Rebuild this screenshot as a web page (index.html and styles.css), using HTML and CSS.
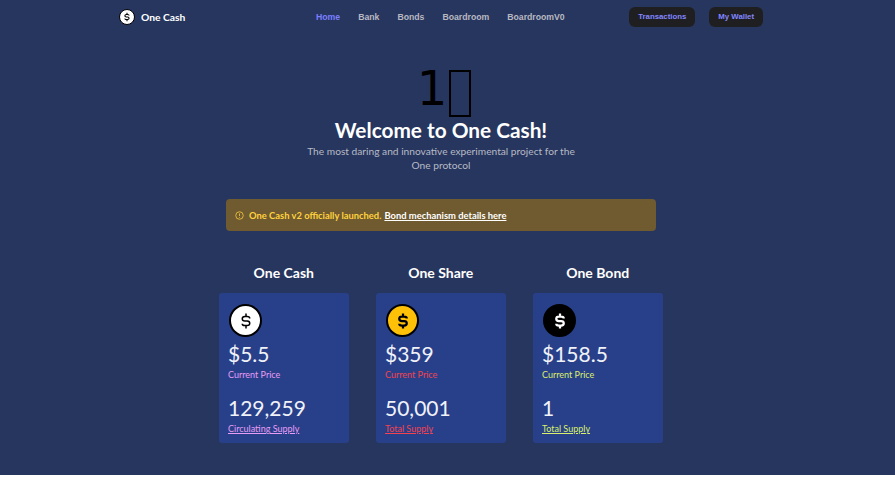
FILE: index.html
```html
<!DOCTYPE html>
<html lang="en">
<head>
    <meta charset="UTF-8">
    <meta name="viewport" content="width=device-width, initial-scale=1.0">
    <title>One Cash</title>
    <link rel="stylesheet" href="styles.css">
</head>
<body>
    <div class="page">
        <nav class="topbar">
            <a class="brand" href="#">
                <span class="coin coin-small">
                    <svg viewBox="0 0 24 24" width="10" height="10"><path d="M12 2v4M12 18v4M17 8.500C17 7 15.500 6 13.500 6h-3C8.500 6 7 7.300 7 9s1.500 3 3.500 3h3c2 0 3.500 1.300 3.500 3s-1.500 3-3.500 3h-3C8.500 18 7 17 7 15.500" fill="none" stroke="#000" stroke-width="2.600"/></svg>
                </span>
                One Cash
            </a>
            <div class="links">
                <a class="link active" href="#">Home</a>
                <a class="link" href="#">Bank</a>
                <a class="link" href="#">Bonds</a>
                <a class="link" href="#">Boardroom</a>
                <a class="link" href="#">BoardroomV0</a>
            </div>
            <div class="actions">
                <button class="pill">Transactions</button>
                <button class="pill">My Wallet</button>
            </div>
        </nav>

        <header class="hero">
            <div class="hero-mark">1<span class="tofu"></span></div>
            <h1>Welcome to One Cash!</h1>
            <p>The most daring and innovative experimental project for the One protocol</p>
        </header>

        <div class="notice">
            <svg class="notice-icon" viewBox="0 0 24 24" width="9" height="9"><circle cx="12" cy="12" r="10" fill="none" stroke="#ffd23f" stroke-width="2"/><path d="M12 6.500v7M12 16v2" stroke="#ffd23f" stroke-width="2"/></svg>
            <span>One Cash v2 officially launched.</span>
            <a href="#">Bond mechanism details here</a>
        </div>

        <section class="cards">
            <div class="col">
                <h2>One Cash</h2>
                <div class="card cash">
                    <span class="coin coin-white">
                        <svg viewBox="0 0 24 24" width="18" height="18"><path d="M12 2v4M12 18v4M17 8.500C17 7 15.500 6 13.500 6h-3C8.500 6 7 7.300 7 9s1.500 3 3.500 3h3c2 0 3.500 1.300 3.500 3s-1.500 3-3.500 3h-3C8.500 18 7 17 7 15.500" fill="none" stroke="#000" stroke-width="2"/></svg>
                    </span>
                    <div class="value">$5.5</div>
                    <div class="label">Current Price</div>
                    <div class="value second">129,259</div>
                    <a class="label" href="#">Circulating Supply</a>
                </div>
            </div>
            <div class="col">
                <h2>One Share</h2>
                <div class="card share">
                    <span class="coin coin-gold">
                        <svg viewBox="0 0 24 24" width="18" height="18"><path d="M12 2v4M12 18v4M17 8.500C17 7 15.500 6 13.500 6h-3C8.500 6 7 7.300 7 9s1.500 3 3.500 3h3c2 0 3.500 1.300 3.500 3s-1.500 3-3.500 3h-3C8.500 18 7 17 7 15.500" fill="none" stroke="#000" stroke-width="3"/></svg>
                    </span>
                    <div class="value">$359</div>
                    <div class="label">Current Price</div>
                    <div class="value second">50,001</div>
                    <a class="label" href="#">Total Supply</a>
                </div>
            </div>
            <div class="col">
                <h2>One Bond</h2>
                <div class="card bond">
                    <span class="coin coin-black">
                        <svg viewBox="0 0 24 24" width="18" height="18"><path d="M12 2v4M12 18v4M17 8.500C17 7 15.500 6 13.500 6h-3C8.500 6 7 7.300 7 9s1.500 3 3.500 3h3c2 0 3.500 1.300 3.500 3s-1.500 3-3.500 3h-3C8.500 18 7 17 7 15.500" fill="none" stroke="#fff" stroke-width="3"/></svg>
                    </span>
                    <div class="value">$158.5</div>
                    <div class="label">Current Price</div>
                    <div class="value second">1</div>
                    <a class="label" href="#">Total Supply</a>
                </div>
            </div>
        </section>
    </div>
</body>
</html>
```

FILE: styles.css
```css
html, body {
    margin: 0;
    padding: 0;
    background: #fff;
}
body {
    font-family: Lato, "Noto Sans", sans-serif;
    color: #fff;
}
.page {
    height: 475px;
    background: #27365e;
    overflow: hidden;
}
.topbar {
    display: flex;
    align-items: center;
    width: 644px;
    height: 33px;
    margin-left: 119px;
}
.brand {
    display: flex;
    align-items: center;
    gap: 6px;
    width: 197px;
    color: #fff;
    font-size: 10.300px;
    font-weight: 700;
    text-decoration: none;
}
.links {
    display: flex;
    gap: 18px;
    flex: 1;
}
.link {
    color: #b9b9c2;
    font-family: "Liberation Sans", sans-serif;
    font-size: 8.700px;
    font-weight: 700;
    text-decoration: none;
}
.link.active {
    color: #7b7fff;
}
.actions {
    display: flex;
    gap: 14px;
}
.pill {
    height: 20px;
    padding: 0 9px;
    border: none;
    border-radius: 6px;
    background: #1f1f21;
    color: #8286ff;
    font-family: "Liberation Sans", sans-serif;
    font-size: 7.800px;
    font-weight: 700;
}
.coin {
    display: flex;
    align-items: center;
    justify-content: center;
    box-sizing: border-box;
    border: 2px solid #000;
    border-radius: 50%;
}
.coin-small {
    width: 16px;
    height: 16px;
    border-width: 1px;
    background: #fff;
}
.card .coin {
    width: 33px;
    height: 33px;
    margin: 0 0 4px 1px;
}
.coin-white { background: #fff; }
.coin-gold { background: #ffc107; }
.coin-black { background: #000; }
.hero {
    width: 300px;
    margin: 32px 0 0 291px;
    text-align: center;
}
.hero-mark {
    display: flex;
    justify-content: center;
    align-items: flex-start;
    height: 52px;
    padding-left: 6px;
    color: #000;
    font-family: "DejaVu Sans", sans-serif;
    font-size: 48px;
    line-height: 47px;
}
.tofu {
    box-sizing: border-box;
    width: 22px;
    height: 47px;
    margin: 5px 0 0 2px;
    border: 2px solid #000;
}
.hero h1 {
    margin: 0;
    font-size: 20.800px;
    font-weight: 700;
    line-height: 26px;
}
.hero p {
    width: 280px;
    margin: 1px auto 0;
    color: #b6bac6;
    font-size: 10.200px;
    line-height: 14px;
}
.notice {
    display: flex;
    align-items: center;
    box-sizing: border-box;
    width: 430px;
    height: 32px;
    margin: 27px 0 0 226px;
    padding-left: 9px;
    border-radius: 4px;
    background: #705a30;
    color: #ffd23f;
    font-size: 9.400px;
    font-weight: 700;
}
.notice-icon {
    margin-right: 5px;
}
.notice a {
    margin-left: 3px;
    color: #fff;
}
.cards {
    display: flex;
    gap: 27.500px;
    margin: 34px 0 0 219px;
}
.col {
    width: 129.500px;
}
.col h2 {
    margin: 0 0 12px;
    font-size: 14px;
    font-weight: 700;
    line-height: 16px;
    text-align: center;
}
.card {
    box-sizing: border-box;
    height: 150px;
    padding: 11px 9px;
    border-radius: 3px;
    background: #28408a;
}
.value {
    font-size: 21px;
    line-height: 26px;
    color: #f0f2f8;
}
.value.second {
    margin-top: 13px;
}
.label {
    display: block;
    margin-top: 1px;
    font-size: 9px;
    line-height: 14px;
}
a.label {
    text-decoration: underline;
}
.cash .label { color: #e79cf5; }
.share .label { color: #f2434f; }
.bond .label { color: #d9ee6a; }
```
